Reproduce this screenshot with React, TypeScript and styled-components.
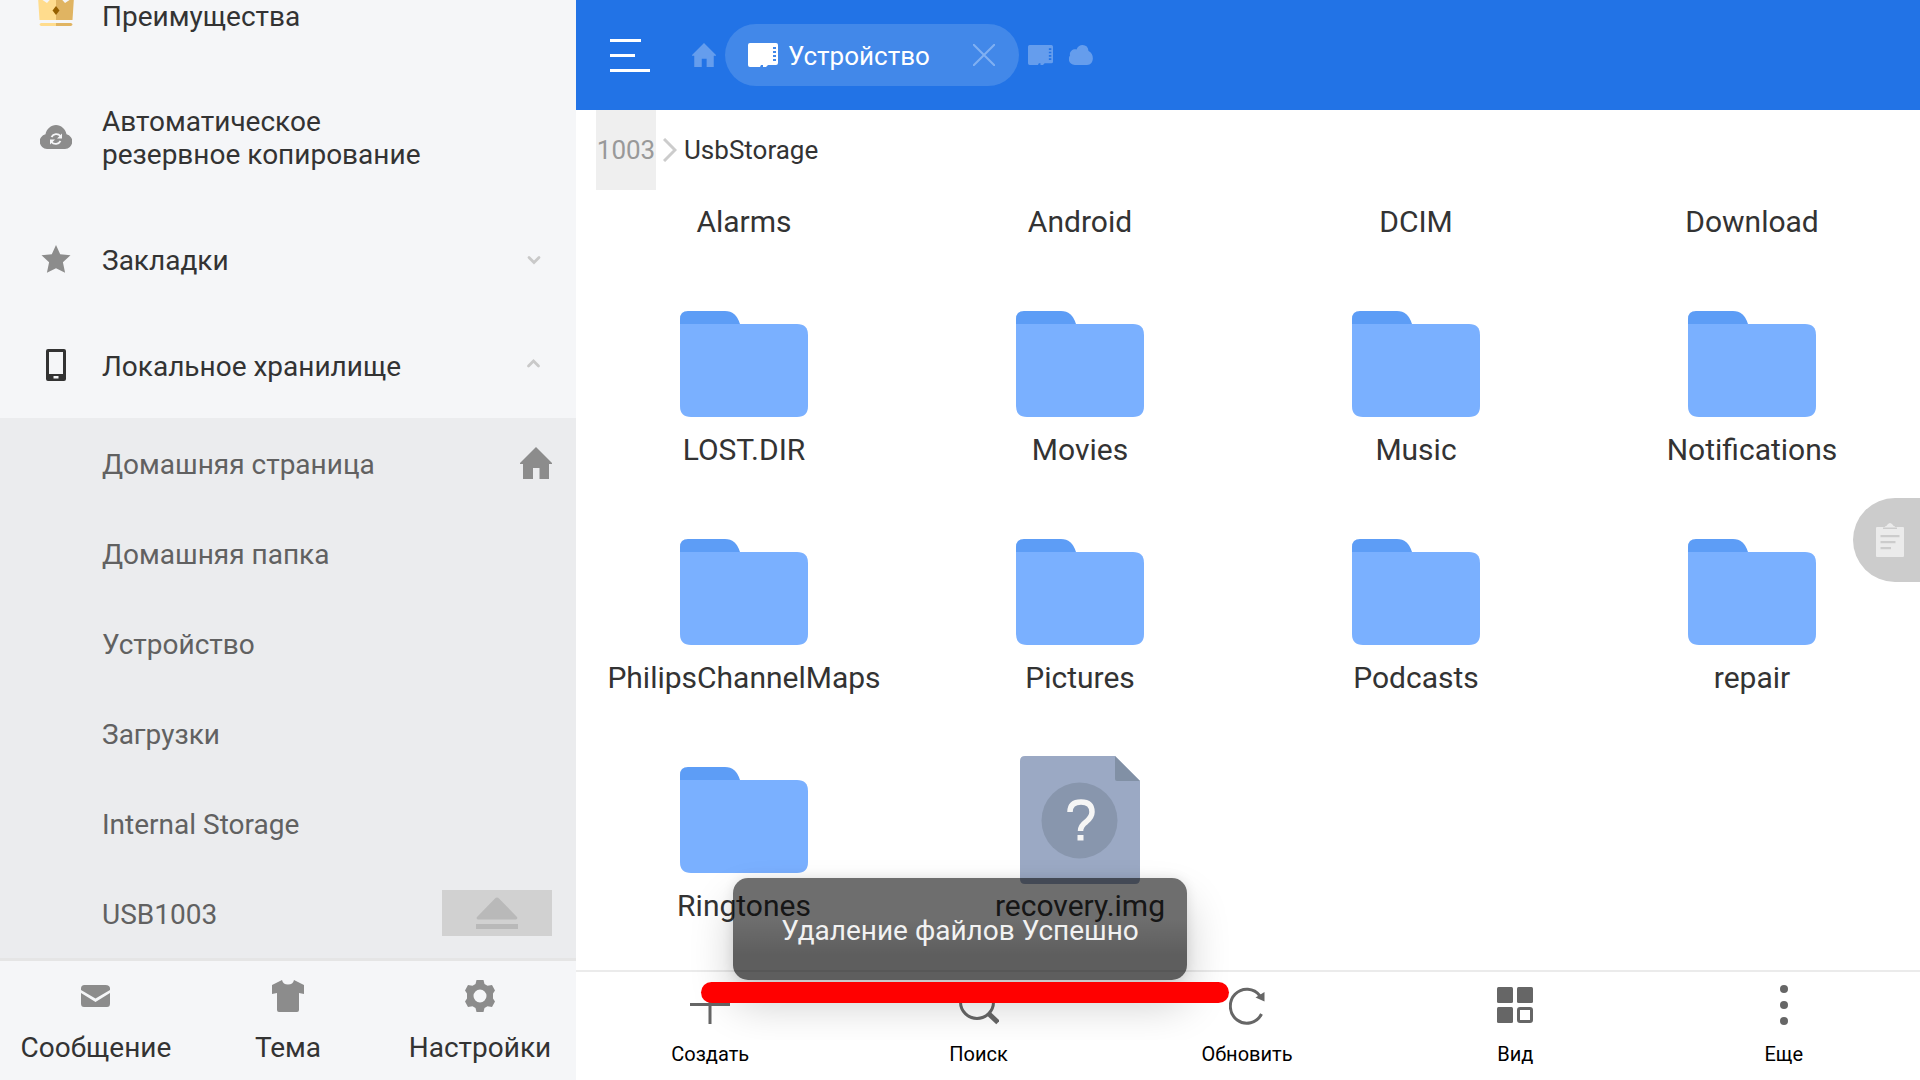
import React from 'react';
import styled, { createGlobalStyle } from 'styled-components';

const GlobalStyle = createGlobalStyle`
  *, *::before, *::after { box-sizing: border-box; }
  html, body, #root { height: 100%; }
  body { margin: 0; background: #fff; font-family: Roboto, "Noto Sans", sans-serif; color: #333; overflow: hidden; }
  button { font: inherit; color: inherit; background: none; border: 0; padding: 0; margin: 0; text-align: inherit; cursor: pointer; }
  a { color: inherit; text-decoration: none; }
  ul { list-style: none; margin: 0; padding: 0; }
  svg { display: block; flex: none; }
`;

const Screen = styled.div`
  position: relative;
  display: grid;
  grid-template-columns: 30% 1fr;
  height: 100%;
`;

const Sidebar = styled.aside`
  display: flex;
  flex-direction: column;
  min-width: 0;
  min-height: 0;
  background: #f5f6f8;
  font-size: 28px;
  line-height: 33px;
`;

const MenuScroll = styled.nav`
  flex: 1;
  min-height: 0;
  overflow: hidden;
  display: flex;
  flex-direction: column;
  justify-content: flex-end;
`;

const MenuRow = styled.button<{ $tall?: boolean }>`
  flex: none;
  display: grid;
  grid-template-columns: 36px 1fr 20px;
  column-gap: 28px;
  align-items: center;
  width: 100%;
  height: ${(p) => (p.$tall ? 138 : 106)}px;
  padding: 0 32px 0 38px;
`;

const MenuIcon = styled.span`
  display: flex;
  justify-content: center;
`;

const MenuLabel = styled.span`
  padding-top: 2px;
`;

const SubMenu = styled.ul`
  flex: none;
  background: #ebecee;
  color: #616161;
`;

const SubItem = styled.li`
  display: flex;
  align-items: center;
  justify-content: space-between;
  height: 90px;
  padding: 0 24px 0 102px;
`;

const PlaceLink = styled.a`
  padding-top: 2px;
`;

const EjectButton = styled.button`
  display: flex;
  align-items: center;
  justify-content: center;
  width: 110px;
  height: 46px;
  background: #d1d1d1;
`;

const SideFooter = styled.footer`
  flex: none;
  display: grid;
  grid-template-columns: repeat(3, 1fr);
  height: 122px;
  border-top: 3px solid #e5e5e5;
`;

const SideAction = styled.button`
  display: flex;
  flex-direction: column;
  align-items: center;
  gap: 16px;
  padding-top: 18px;
`;

const Main = styled.main`
  display: flex;
  flex-direction: column;
  min-width: 0;
  min-height: 0;
`;

const TopBar = styled.header`
  flex: none;
  display: flex;
  align-items: center;
  height: 110px;
  padding-left: 34px;
  background: #2273e6;
  color: #fff;
`;

const MenuButton = styled.button`
  margin-right: 42px;
`;

const Tab = styled.button`
  opacity: 0.3;
`;

const ActiveTab = styled.div`
  display: flex;
  align-items: center;
  width: 294px;
  height: 62px;
  margin: 0 9px;
  padding: 0 24px 0 23px;
  border-radius: 31px;
  background: #4288e9;
  font-size: 26px;
  line-height: 32px;
`;

const TabName = styled.span`
  flex: 1;
  margin-left: 10px;
  padding-top: 2px;
`;

const MiniTabs = styled.div`
  display: flex;
  align-items: center;
  gap: 16px;
`;

const Breadcrumbs = styled.nav`
  flex: none;
  display: flex;
  align-items: stretch;
  height: 80px;
  padding-left: 20px;
  font-size: 26px;
  line-height: 80px;
`;

const Crumb = styled.a<{ $parent?: boolean }>`
  ${(p) => p.$parent && 'width: 60px; text-align: center; background: #efefef; color: #999;'}
`;

const CrumbArrow = styled.span`
  display: flex;
  align-items: center;
  padding: 0 7px;
`;

const Files = styled.section`
  flex: 1;
  min-height: 0;
  overflow: hidden;
  display: flex;
  flex-direction: column;
  justify-content: flex-end;
  padding-bottom: 2px;
`;

const FileGrid = styled.ul`
  flex: none;
  display: grid;
  grid-template-columns: repeat(4, 1fr);
  grid-auto-rows: 228px;
`;

const FileItem = styled.button`
  display: flex;
  flex-direction: column;
  align-items: center;
  justify-content: flex-start;
  gap: 4px;
  width: 100%;
  height: 100%;
  padding-top: 16px;
  font-size: 30px;
  line-height: 36px;
`;

const Toolbar = styled.footer`
  flex: none;
  display: grid;
  grid-template-columns: repeat(5, 1fr);
  height: 110px;
  padding-right: 2px;
  border-top: 2px solid #ebebeb;
`;

const Tool = styled.button`
  display: flex;
  flex-direction: column;
  align-items: center;
  gap: 15px;
  padding-top: 11px;
  font-size: 20px;
  line-height: 24px;
  color: #000;
`;

const ClipboardButton = styled.button`
  position: absolute;
  right: 0;
  top: 498px;
  display: flex;
  align-items: center;
  width: 67px;
  height: 84px;
  padding-left: 23px;
  border-radius: 42px 0 0 42px;
  background: #ccc;
`;

const ToastLayer = styled.div`
  position: absolute;
  left: 0;
  right: 0;
  bottom: 40px;
  display: flex;
  justify-content: center;
  padding: 80px 80px 60px;
  overflow: hidden;
  pointer-events: none;
`;

const Toast = styled.div`
  position: relative;
  padding: 36px 48px 33px;
  border-radius: 15px;
  background: linear-gradient(rgba(0, 0, 0, 0.57), rgba(0, 0, 0, 0.57) 40%, rgba(0, 0, 0, 0.63) 75%);
  box-shadow: 0 24px 44px rgba(0, 0, 0, 0.2), 0 0 12px rgba(0, 0, 0, 0.1);
  font-size: 28px;
  line-height: 33px;
  color: #f2f2f2;
`;

const RedMarker = styled.div`
  position: absolute;
  left: 701px;
  bottom: 77px;
  width: 528px;
  height: 21px;
  border-radius: 11px;
  background: #f00;
`;

const gray = '#8c8c8c';
const tool = '#666';

const Crown = () => (
  <svg width="36" height="36" viewBox="0 0 36 36">
    <path d="M0 0 9 6 18 -4V23H1.500Z" fill="#ffdc8d" />
    <path d="M36 0 27 6 18 -4V23H34.500Z" fill="#e0b462" />
    <path d="M3 26H18V29H3q-3-1.500 0-3Z" fill="#ffdc8d" />
    <path d="M18 26H33q3 1.500 0 3H18Z" fill="#e0b462" />
    <path d="m18 9 3.500 4.500L18 18l-3.500-4.500Z" fill="#966000" />
  </svg>
);
const CloudSync = () => (
  <svg width="32" height="24" viewBox="0 0 32 24">
    <path d="M7 24a7.500 7.500 0 0 1-1.500-14.800C6.500 4 11 0 16 0s9.500 4 10.500 9.200A7.500 7.500 0 0 1 25 24Z" fill={gray} />
    <g fill="none" stroke="#f5f6f8" strokeWidth="1.800"><path d="M11.500 12a5.500 5.500 0 0 1 9-1M20.500 16a5.500 5.500 0 0 1-9 1" /></g>
    <path d="M22 8.500v5h-5ZM10 19.500v-5h5Z" fill="#f5f6f8" />
  </svg>
);
const Star = () => (
  <svg width="30" height="30" viewBox="0 0 30 30"><path d="m15 1 4.200 9.300 10.300.9-7.600 7 2.200 10.600L15 24.300 5.900 28.800 8.100 18.200.5 11.200l10.300-.9Z" fill={gray} /></svg>
);
const Phone = () => (
  <svg width="20" height="32" viewBox="0 0 20 32"><path fillRule="evenodd" d="M2 0h16a2 2 0 0 1 2 2v28a2 2 0 0 1-2 2H2a2 2 0 0 1-2-2V2a2 2 0 0 1 2-2Zm1 3v22h14V3ZM7.500 27v2.500h5V27Z" fill="#333" /></svg>
);
const Chevron = ({ up }: { up?: boolean }) => (
  <svg width="20" height="20" viewBox="0 0 20 20"><path d={up ? 'm4.500 11 5-5 5 5' : 'm5 8.500 5 5 5-5'} fill="none" stroke="#c9c9c9" strokeWidth="2.800" strokeLinecap="round" /></svg>
);
const Home = ({ size, color }: { size: number; color: string }) => (
  <svg width={size} height={size} viewBox="0 0 32 32"><path d="m16 0 16 16v1h-3v15h-9.500V21h-6.500v11H3V17H0v-1Z" fill={color} /></svg>
);
const Eject = () => (
  <svg width="42" height="32" viewBox="0 0 42 32"><path d="M19 1.500q2-2 4 0l18 18.500q1 2-1 2.500H2q-2-.500-1-2.500ZM0 27h42v5H0Z" fill="#b9b9b9" /></svg>
);
const Mail = () => (
  <svg width="34" height="36" viewBox="0 0 34 36"><path d="M2 9.500Q2 6 5.500 6h21Q31 6 31 9.500V11L16.500 19.500 2 11ZM2 14l14.500 9L31 14v10.500q0 3.500-3 3.500H5q-3 0-3-3.500Z" fill={gray} /></svg>
);
const Shirt = () => (
  <svg width="32" height="36" viewBox="0 0 32 36"><path d="M10 1q1 4.500 6 4.500t6-4.500l10 5v9l-5-1v17q0 2-2 2H7q-2 0-2-2V14l-5 1V6Z" fill={gray} /></svg>
);
const Gear = () => (
  <svg width="32" height="36" viewBox="0 0 32 36"><path fillRule="evenodd" d="M12.500 1h7l1 4 3 1.700L28 6l3 5.500-2 3v5l2 3-3 5.500-4.500-.700-3 1.700-1 4h-7l-1-4-3-1.700L4 28l-3-5.500 2-3v-5l-2-3L4 6l4.500.7 3-1.700ZM16 10.500a6.500 6.500 0 1 0 0 13 6.500 6.500 0 0 0 0-13Z" fill={gray} /></svg>
);
const Hamburger = () => (
  <svg width="40" height="33" viewBox="0 0 40 33"><path d="M0 0h31v3H0ZM0 15h25v3H0ZM0 30h40v3H0Z" fill="#fff" /></svg>
);
const Card = ({ width }: { width: number }) => (
  <svg width={width} height={width * 0.8} viewBox="0 0 30 24"><path fillRule="evenodd" d="M2 0h26q2 0 2 2v18q0 2-2 2h-8l-2 2h-3v-2h-2l-1 2H2q-2 0-2-2V2q0-2 2-2Zm23 4v2h3V4Zm0 4v2h3V8Zm0 4v2h3v-2Zm0 4v2h3v-2Z" fill="#fff" /></svg>
);
const Cloud = () => (
  <svg width="24" height="20" viewBox="0 0 24 20"><path d="M6 20C0 20-1.500 14 1 10.500 0 6.500 4 3.500 7.500 4.500 9 1 11 0 13.500 0q5.500 0 6 6C26 9 25 20 18 20Z" fill="#fff" /></svg>
);
const Close = () => (
  <svg width="22" height="22" viewBox="0 0 22 22"><path d="m0 0 22 22M22 0 0 22" stroke="#80b0f2" strokeWidth="2" /></svg>
);
const CrumbChevron = () => (
  <svg width="14" height="24" viewBox="0 0 14 24"><path d="m1 1 11 11L1 23" fill="none" stroke="#ccc" strokeWidth="3" /></svg>
);
const Folder = () => (
  <svg width="128" height="128" viewBox="0 0 128 128">
    <path d="M0 26V19q0-8 8-8h37q11 0 15 13v4H0Z" fill="#5d9df6" />
    <path d="M0 24h117q11 0 11 11v71q0 11-11 11H11q-11 0-11-11Z" fill="#7ab0ff" />
  </svg>
);
const UnknownFile = () => (
  <svg width="120" height="128" viewBox="0 0 120 128">
    <path d="M5 0h90l25 25v98q0 5-5 5H5q-5 0-5-5V5q0-5 5-5Z" fill="#9ba9c4" />
    <path d="m95 0 25 25H97q-2 0-2-2Z" fill="#8190a5" />
    <circle cx="59.500" cy="64.500" r="38" fill="#8896ad" />
    <path d="M50 56q0-10 11-10t11 10q0 5-6 10-5.500 4-5.500 9" fill="none" stroke="#f5f5f5" strokeWidth="5.500" />
    <path d="M57.500 79h6v5.500h-6Z" fill="#f5f5f5" />
  </svg>
);
const Plus = () => (
  <svg width="40" height="44" viewBox="0 0 40 44"><path d="M20 3v38M0 21.500h40" stroke={tool} strokeWidth="3" /></svg>
);
const Search = () => (
  <svg width="40" height="44" viewBox="0 0 40 44"><circle cx="18" cy="19" r="16.500" fill="none" stroke={tool} strokeWidth="3" /><path d="m29 30 10 9.500" stroke={tool} strokeWidth="5" /></svg>
);
const Refresh = () => (
  <svg width="36" height="44" viewBox="0 0 36 44"><path d="M32.500 31A16.500 17 0 1 1 31 13" fill="none" stroke={tool} strokeWidth="3" /><path d="M35.500 9v9.500l-9-4Z" fill={tool} /></svg>
);
const GridIcon = () => (
  <svg width="36" height="44" viewBox="0 0 36 44"><g fill={tool}><rect y="4" width="16" height="16" rx="1.500" /><rect x="20" y="4" width="16" height="16" rx="1.500" /><rect y="24" width="16" height="16" rx="1.500" /></g><rect x="21.500" y="25.500" width="13" height="13" rx="1.500" fill="none" stroke={tool} strokeWidth="3" /></svg>
);
const Dots = () => (
  <svg width="8" height="44" viewBox="0 0 8 44"><g fill={tool}><circle cx="4" cy="6" r="4" /><circle cx="4" cy="22" r="4" /><circle cx="4" cy="38" r="4" /></g></svg>
);
const Clipboard = () => (
  <svg width="28" height="34" viewBox="0 0 28 34"><path fillRule="evenodd" d="M9 3.500Q11 3 11.500 1.500q2.500-3 5 0Q17 3 19 3.500V4h8q1 0 1 1v28q0 1-1 1H1q-1 0-1-1V5q0-1 1-1h8ZM7 4.500v1.500h14V4.500ZM4.500 12v2.300h19V12Zm0 6v2.300h15V18Zm0 6v2.300h10.500V24Z" fill="#ebebeb" /></svg>
);

const places = ['Домашняя страница', 'Домашняя папка', 'Устройство', 'Загрузки', 'Internal Storage', 'USB1003'];
const files = ['Alarms', 'Android', 'DCIM', 'Download', 'LOST.DIR', 'Movies', 'Music', 'Notifications', 'PhilipsChannelMaps', 'Pictures', 'Podcasts', 'repair', 'Ringtones', 'recovery.img'];
const sideActions = [
  { label: 'Сообщение', icon: <Mail /> },
  { label: 'Тема', icon: <Shirt /> },
  { label: 'Настройки', icon: <Gear /> },
];
const tools = [
  { label: 'Создать', icon: <Plus /> },
  { label: 'Поиск', icon: <Search /> },
  { label: 'Обновить', icon: <Refresh /> },
  { label: 'Вид', icon: <GridIcon /> },
  { label: 'Еще', icon: <Dots /> },
];

export default function App() {
  return (
    <Screen>
      <GlobalStyle />
      <Sidebar>
        <MenuScroll>
          <MenuRow><MenuIcon><Crown /></MenuIcon><MenuLabel>Преимущества</MenuLabel></MenuRow>
          <MenuRow $tall><MenuIcon><CloudSync /></MenuIcon><MenuLabel>Автоматическое<br />резервное копирование</MenuLabel></MenuRow>
          <MenuRow><MenuIcon><Star /></MenuIcon><MenuLabel>Закладки</MenuLabel><Chevron /></MenuRow>
          <MenuRow><MenuIcon><Phone /></MenuIcon><MenuLabel>Локальное хранилище</MenuLabel><Chevron up /></MenuRow>
          <SubMenu>
            {places.map((name, i) => (
              <SubItem key={name}>
                <PlaceLink href="#">{name}</PlaceLink>
                {i === 0 && <Home size={32} color={gray} />}
                {name === 'USB1003' && <EjectButton aria-label="Извлечь"><Eject /></EjectButton>}
              </SubItem>
            ))}
          </SubMenu>
        </MenuScroll>
        <SideFooter>
          {sideActions.map((a) => <SideAction key={a.label}>{a.icon}{a.label}</SideAction>)}
        </SideFooter>
      </Sidebar>
      <Main>
        <TopBar>
          <MenuButton aria-label="Меню"><Hamburger /></MenuButton>
          <Tab aria-label="Домой"><Home size={24} color="#fff" /></Tab>
          <ActiveTab>
            <Card width={30} />
            <TabName>Устройство</TabName>
            <button aria-label="Закрыть"><Close /></button>
          </ActiveTab>
          <MiniTabs>
            <Tab aria-label="Карта"><Card width={25} /></Tab>
            <Tab aria-label="Облако"><Cloud /></Tab>
          </MiniTabs>
        </TopBar>
        <Breadcrumbs>
          <Crumb href="#" $parent>1003</Crumb>
          <CrumbArrow><CrumbChevron /></CrumbArrow>
          <Crumb href="#">UsbStorage</Crumb>
        </Breadcrumbs>
        <Files>
          <FileGrid>
            {files.map((name) => (
              <li key={name}>
                <FileItem>
                  {name.endsWith('.img') ? <UnknownFile /> : <Folder />}
                  {name}
                </FileItem>
              </li>
            ))}
          </FileGrid>
        </Files>
        <Toolbar>
          {tools.map((t) => <Tool key={t.label}>{t.icon}{t.label}</Tool>)}
        </Toolbar>
      </Main>
      <ClipboardButton aria-label="Буфер обмена"><Clipboard /></ClipboardButton>
      <ToastLayer><Toast role="status">Удаление файлов Успешно</Toast></ToastLayer>
      <RedMarker />
    </Screen>
  );
}
